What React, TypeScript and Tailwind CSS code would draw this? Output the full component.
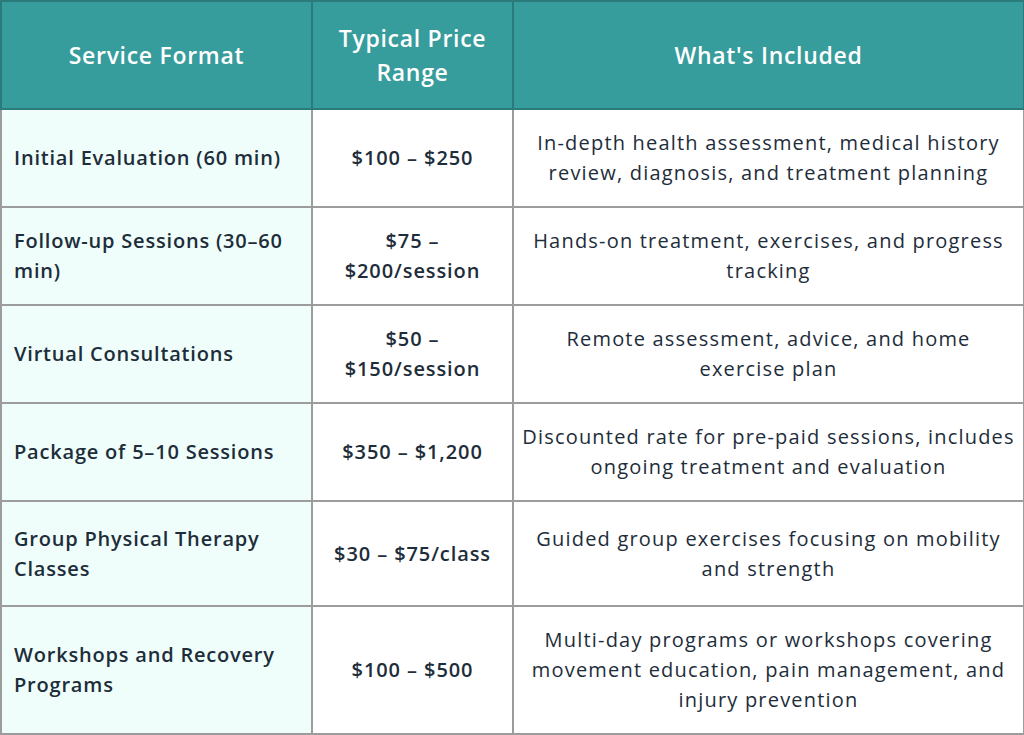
const ROWS: { format: string[]; price: string[]; included: string[]; h: string }[] = [
  {
    format: ['Initial Evaluation (60 min)'],
    price: ['$100 – $250'],
    included: ['In-depth health assessment, medical history', 'review, diagnosis, and treatment planning'],
    h: 'h-[98px]',
  },
  {
    format: ['Follow-up Sessions (30–60', 'min)'],
    price: ['$75 –', '$200/session'],
    included: ['Hands-on treatment, exercises, and progress', 'tracking'],
    h: 'h-[98px]',
  },
  {
    format: ['Virtual Consultations'],
    price: ['$50 –', '$150/session'],
    included: ['Remote assessment, advice, and home', 'exercise plan'],
    h: 'h-[98px]',
  },
  {
    format: ['Package of 5–10 Sessions'],
    price: ['$350 – $1,200'],
    included: ['Discounted rate for pre-paid sessions, includes', 'ongoing treatment and evaluation'],
    h: 'h-[98px]',
  },
  {
    format: ['Group Physical Therapy', 'Classes'],
    price: ['$30 – $75/class'],
    included: ['Guided group exercises focusing on mobility', 'and strength'],
    h: 'h-[105px]',
  },
  {
    format: ['Workshops and Recovery', 'Programs'],
    price: ['$100 – $500'],
    included: [
      'Multi-day programs or workshops covering',
      'movement education, pain management, and',
      'injury prevention',
    ],
    h: 'h-[128px]',
  },
];

function Lines({ lines }: { lines: string[] }) {
  return (
    <>
      {lines.map((l, i) => (
        <span key={i} className="block whitespace-nowrap">
          {l}
        </span>
      ))}
    </>
  );
}

export default function App() {
  return (
    <div className="min-h-[735px] w-[1024px] bg-white font-['Open_Sans',sans-serif] text-[#1e2d3a]">
      <table className="w-[1023px] table-fixed border-collapse">
        <colgroup>
          <col className="w-[311px]" />
          <col className="w-[201px]" />
          <col className="w-[511px]" />
        </colgroup>
        <thead>
          <tr className="h-[108px] bg-[#379c9c] text-[23px] leading-[34px] tracking-[0.7px] text-white">
            <th className="border-2 border-[#2b7b7b] px-2 text-center font-semibold">Service Format</th>
            <th className="border-2 border-[#2b7b7b] px-2 text-center font-semibold">
              <Lines lines={['Typical Price', 'Range']} />
            </th>
            <th className="border-2 border-[#2b7b7b] px-2 text-center font-semibold">What's Included</th>
          </tr>
        </thead>
        <tbody className="text-[20px] leading-[30px]">
          {ROWS.map((r, i) => (
            <tr key={i} className={r.h}>
              <td className="border-2 border-[#9c9c9c] bg-[#effefb] px-[12px] text-left font-semibold tracking-[0.8px]">
                <Lines lines={r.format} />
              </td>
              <td className="border-2 border-[#9c9c9c] px-1 text-center font-semibold tracking-[0.9px]">
                <Lines lines={r.price} />
              </td>
              <td className="border-2 border-[#9c9c9c] px-1 text-center font-normal tracking-[1.2px]">
                <Lines lines={r.included} />
              </td>
            </tr>
          ))}
        </tbody>
      </table>
    </div>
  );
}
